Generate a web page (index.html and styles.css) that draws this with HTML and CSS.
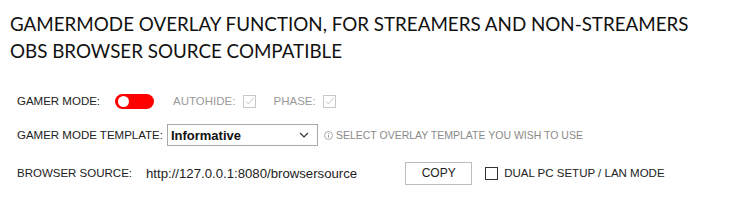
FILE: index.html
```html
<!DOCTYPE html>
<html lang="en">
<head>
    <meta charset="UTF-8">
    <title>Gamer Mode</title>
    <link rel="stylesheet" href="styles.css">
</head>
<body>

<div class="page">
    <h1 class="title">GAMERMODE OVERLAY FUNCTION, FOR STREAMERS AND NON-STREAMERS<br>OBS BROWSER SOURCE COMPATIBLE</h1>

    <div class="settings">
        <!-- gamer mode toggle -->
        <div class="row">
            <span class="label">GAMER MODE:</span>
            <span class="toggle"><span class="knob"></span></span>
            <span class="label muted autohide">AUTOHIDE:</span>
            <span class="check disabled autohide-check">
                <svg width="11" height="11" viewBox="0 0 11 11"><path d="M2 5.5 L4.5 8 L9.5 2" fill="none" stroke="#c8c8c8" stroke-width="1"/></svg>
            </span>
            <span class="label muted phase">PHASE:</span>
            <span class="check disabled phase-check">
                <svg width="11" height="11" viewBox="0 0 11 11"><path d="M2 5.5 L4.5 8 L9.5 2" fill="none" stroke="#c8c8c8" stroke-width="1"/></svg>
            </span>
        </div>

        <!-- template select -->
        <div class="row">
            <span class="label">GAMER MODE TEMPLATE:</span>
            <div class="select">
                <span>Informative</span>
                <svg width="10" height="6" viewBox="0 0 10 6"><path d="M1 1 L5 5 L9 1" fill="none" stroke="#333" stroke-width="1.2"/></svg>
            </div>
            <span class="hint">
                <svg width="9" height="9" viewBox="0 0 9 9"><circle cx="4.5" cy="4.5" r="4" fill="none" stroke="#999" stroke-width="0.8"/><path d="M4.5 3.8 V7" stroke="#999" stroke-width="0.9"/><circle cx="4.5" cy="2.5" r="0.55" fill="#999"/></svg>
                SELECT OVERLAY TEMPLATE YOU WISH TO USE
            </span>
        </div>

        <!-- browser source -->
        <div class="row">
            <span class="label">BROWSER SOURCE:</span>
            <span class="url">http://127.0.0.1:8080/browsersource</span>
            <button class="copy">COPY</button>
            <span class="check dual-check"></span>
            <span class="label dual">DUAL PC SETUP / LAN MODE</span>
        </div>
    </div>
</div>

</body>
</html>
```

FILE: styles.css
```css
body {
    margin: 0;
    padding: 0;
    background-color: #ffffff;
    font-family: "Liberation Sans", Arial, sans-serif;
    color: #222;
}

.page {
    padding: 10px 10px 0 10px;
}

.title {
    margin: 0;
    font-family: "Lato", sans-serif;
    font-weight: 400;
    font-size: 18.8px;
    line-height: 27px;
    color: #111;
}

.settings {
    padding: 22px 0 0 7px;
}

.row {
    display: flex;
    align-items: center;
}

.row:nth-child(1) {
    height: 30px;
}

.row:nth-child(2) {
    height: 38px;
}

.row:nth-child(3) {
    height: 38px;
}

.label {
    font-size: 11.5px;
    color: #222;
}

.label.muted {
    color: #9a9a9a;
}

.toggle {
    display: inline-flex;
    align-items: center;
    width: 39px;
    height: 15px;
    margin-left: 15px;
    background-color: #ff0000;
    border-radius: 8px;
}

.knob {
    width: 11px;
    height: 11px;
    margin-left: 3px;
    background-color: #fff;
    border-radius: 50%;
}

.autohide {
    margin-left: 19px;
}

.phase {
    margin-left: 17px;
}

.check {
    display: inline-flex;
    align-items: center;
    justify-content: center;
    width: 11px;
    height: 11px;
    border: 1px solid #333;
    background-color: #fff;
}

.check.disabled {
    border-color: #c8c8c8;
}

.autohide-check {
    margin-left: 8px;
}

.phase-check {
    margin-left: 7px;
}

.dual-check {
    margin-left: 13px;
}

.select {
    box-sizing: border-box;
    display: flex;
    align-items: center;
    justify-content: space-between;
    width: 151px;
    height: 22px;
    margin-left: 4px;
    padding: 0 8px 0 3px;
    border: 1px solid #a9a9a9;
    font-size: 13px;
    font-weight: bold;
    color: #111;
}

.hint {
    display: inline-flex;
    align-items: center;
    gap: 3px;
    margin-left: 6px;
    font-size: 10.5px;
    color: #8a8a8a;
}

.url {
    margin-left: 14px;
    font-size: 13.2px;
    color: #222;
}

.copy {
    width: 67px;
    height: 23px;
    margin-left: 48px;
    padding: 0;
    background-color: #fff;
    border: 1px solid #bdbdbd;
    font-family: "Liberation Sans", Arial, sans-serif;
    font-size: 12px;
    color: #222;
}

.dual {
    margin-left: 6px;
}
```
